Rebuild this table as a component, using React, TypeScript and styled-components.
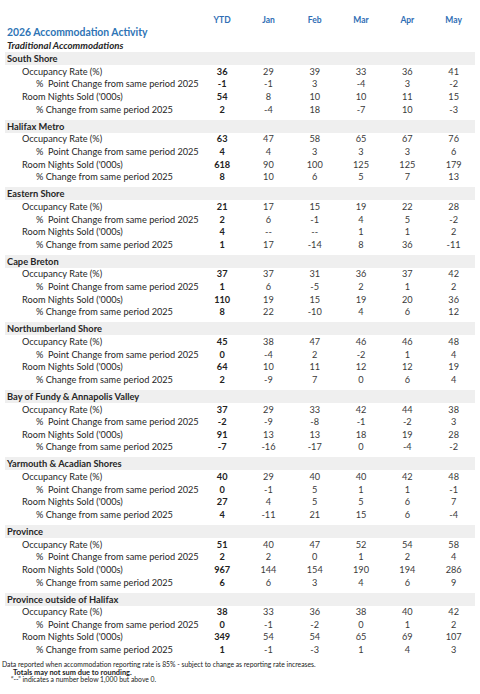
import React from "react";
import styled, { createGlobalStyle } from "styled-components";

const Global = createGlobalStyle`
  html, body { margin: 0; padding: 0; background: #ffffff; }
  body { font-family: Lato, "Open Sans", "Liberation Sans", sans-serif; color: #262626; }
`;

const Page = styled.div`
  width: 480px;
  height: 694px;
  box-sizing: border-box;
  padding: 14px 0 0 0;
  background: #fff;
  overflow: hidden;
`;

const Row = styled.div<{ $h?: number }>`
  display: grid;
  grid-template-columns: 199px repeat(6, 46.3px);
  align-items: center;
  height: ${(p) => p.$h ?? 12.6}px;
`;

const ColHead = styled.div`
  text-align: center;
  color: #2f6eb5;
  font-weight: 700;
  font-size: 8.5px;
`;

const Title = styled.div`
  padding-left: 7px;
  height: 13px;
  line-height: 13px;
  color: #2e74b5;
  font-weight: 700;
  font-size: 10.4px;
  white-space: nowrap;
`;

const Subtitle = styled.div`
  padding-left: 7px;
  height: 12px;
  line-height: 12px;
  font-weight: 700;
  font-style: italic;
  font-size: 9.7px;
  color: #262626;
  margin-bottom: 1px;
`;

const Section = styled.div`
  padding-bottom: 4.2px;
`;

const Band = styled.div`
  margin: 0 5px;
  height: 13px;
  line-height: 13px;
  background: #efefef;
  padding-left: 2px;
  font-weight: 700;
  font-size: 9.3px;
  color: #262626;
`;

const Label = styled.div<{ $indent: number }>`
  padding-left: ${(p) => p.$indent}px;
  font-size: 9.2px;
  white-space: pre;
  color: #262626;
`;

const Cell = styled.div<{ $bold?: boolean }>`
  text-align: center;
  font-size: 9.2px;
  font-weight: ${(p) => (p.$bold ? 700 : 400)};
  color: ${(p) => (p.$bold ? "#222" : "#3a3a3a")};
`;

const Footer = styled.div`
  margin-top: 1px;
  padding-left: 2px;
  line-height: 7.6px;
  color: #222;
`;

const FootLine = styled.div<{ $indent?: number; $bold?: boolean; $size?: number }>`
  padding-left: ${(p) => p.$indent ?? 0}px;
  font-weight: ${(p) => (p.$bold ? 700 : 400)};
  font-size: ${(p) => p.$size ?? 6.8}px;
  white-space: nowrap;
`;

const cols = ["YTD", "Jan", "Feb", "Mar", "Apr", "May"];
const labels: [string, number][] = [
  ["Occupancy Rate (%)", 22],
  ["%  Point Change from same period 2025", 36],
  ["Room Nights Sold ('000s)", 22],
  ["% Change from same period 2025", 36],
];

const data: [string, string[][]][] = [
  ["South Shore", [
    ["36", "29", "39", "33", "36", "41"],
    ["-1", "-1", "3", "-4", "3", "-2"],
    ["54", "8", "10", "10", "11", "15"],
    ["2", "-4", "18", "-7", "10", "-3"],
  ]],
  ["Halifax Metro", [
    ["63", "47", "58", "65", "67", "76"],
    ["4", "4", "3", "3", "3", "6"],
    ["618", "90", "100", "125", "125", "179"],
    ["8", "10", "6", "5", "7", "13"],
  ]],
  ["Eastern Shore", [
    ["21", "17", "15", "19", "22", "28"],
    ["2", "6", "-1", "4", "5", "-2"],
    ["4", "--", "--", "1", "1", "2"],
    ["1", "17", "-14", "8", "36", "-11"],
  ]],
  ["Cape Breton", [
    ["37", "37", "31", "36", "37", "42"],
    ["1", "6", "-5", "2", "1", "2"],
    ["110", "19", "15", "19", "20", "36"],
    ["8", "22", "-10", "4", "6", "12"],
  ]],
  ["Northumberland Shore", [
    ["45", "38", "47", "46", "46", "48"],
    ["0", "-4", "2", "-2", "1", "4"],
    ["64", "10", "11", "12", "12", "19"],
    ["2", "-9", "7", "0", "6", "4"],
  ]],
  ["Bay of Fundy & Annapolis Valley", [
    ["37", "29", "33", "42", "44", "38"],
    ["-2", "-9", "-8", "-1", "-2", "3"],
    ["91", "13", "13", "18", "19", "28"],
    ["-7", "-16", "-17", "0", "-4", "-2"],
  ]],
  ["Yarmouth & Acadian Shores", [
    ["40", "29", "40", "40", "42", "48"],
    ["0", "-1", "5", "1", "1", "-1"],
    ["27", "4", "5", "5", "6", "7"],
    ["4", "-11", "21", "15", "6", "-4"],
  ]],
  ["Province", [
    ["51", "40", "47", "52", "54", "58"],
    ["2", "2", "0", "1", "2", "4"],
    ["967", "144", "154", "190", "194", "286"],
    ["6", "6", "3", "4", "6", "9"],
  ]],
  ["Province outside of Halifax", [
    ["38", "33", "36", "38", "40", "42"],
    ["0", "-1", "-2", "0", "1", "2"],
    ["349", "54", "54", "65", "69", "107"],
    ["1", "-1", "-3", "1", "4", "3"],
  ]],
];

export default function App() {
  return (
    <>
      <Global />
      <Page>
        <Row $h={12}>
          <div />
          {cols.map((c) => (
            <ColHead key={c}>{c}</ColHead>
          ))}
        </Row>
        <Title>2026 Accommodation Activity</Title>
        <Subtitle>Traditional Accommodations</Subtitle>
        {data.map(([name, rows]) => (
          <Section key={name}>
            <Band>{name}</Band>
            {rows.map((vals, i) => (
              <Row key={i}>
                <Label $indent={labels[i][1]}>{labels[i][0]}</Label>
                {vals.map((v, j) => (
                  <Cell key={j} $bold={j === 0}>{v}</Cell>
                ))}
              </Row>
            ))}
          </Section>
        ))}
        <Footer>
          <FootLine>Data reported when accommodation reporting rate is 85% - subject to change as reporting rate increases.</FootLine>
          <FootLine $indent={11} $bold $size={7.4}>Totals may not sum due to rounding.</FootLine>
          <FootLine $indent={9} $size={6.8}>“--” indicates a number below 1,000 but above 0.</FootLine>
        </Footer>
      </Page>
    </>
  );
}
